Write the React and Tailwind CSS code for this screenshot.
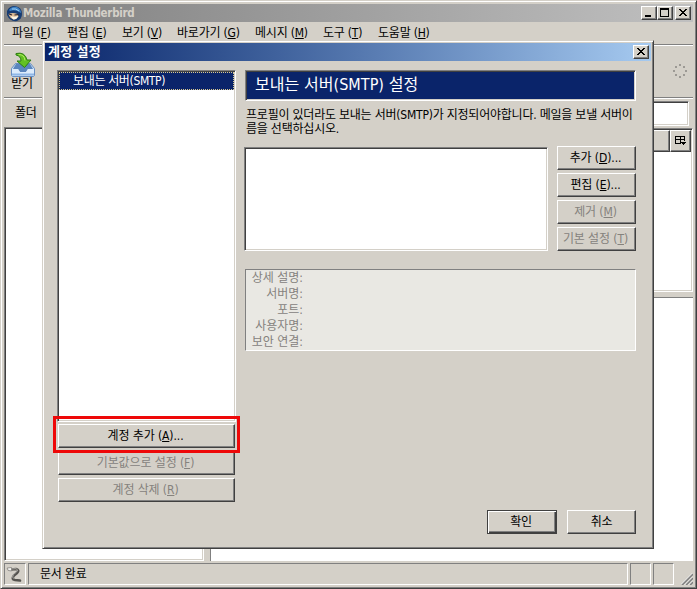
const RAISED =
  'border border-t-white border-l-white border-r-[#404040] border-b-[#404040] bg-[#d4d0c8] shadow-[inset_-1px_-1px_0_#808080]'
const SUNKEN =
  'border border-t-[#808080] border-l-[#808080] border-r-white border-b-white shadow-[inset_1px_1px_0_#404040,inset_-1px_-1px_0_#d4d0c8]'
const THIN_SUNKEN = 'border border-t-[#808080] border-l-[#808080] border-r-white border-b-white'
const WINDOW =
  'border border-t-[#d4d0c8] border-l-[#d4d0c8] border-r-[#404040] border-b-[#404040] bg-[#d4d0c8] shadow-[inset_1px_1px_0_#fff,inset_-1px_-1px_0_#808080]'

const MENUS = [
  { label: '파일', mnemonic: 'F', width: 'w-[55px]' },
  { label: '편집', mnemonic: 'E', width: 'w-[55px]' },
  { label: '보기', mnemonic: 'V', width: 'w-[55px]' },
  { label: '바로가기', mnemonic: 'G', width: 'w-[78px]' },
  { label: '메시지', mnemonic: 'M', width: 'w-[68px]' },
  { label: '도구', mnemonic: 'T', width: 'w-[55px]' },
  { label: '도움말', mnemonic: 'H', width: 'w-[60px]' },
]

const SERVER_BUTTONS = [
  { label: '추가', mnemonic: 'D', dots: true },
  { label: '편집', mnemonic: 'E', dots: true },
  { label: '제거', mnemonic: 'M', disabled: true },
  { label: '기본 설정', mnemonic: 'T', disabled: true },
]

const ACCOUNT_BUTTONS = [
  { label: '계정 추가', mnemonic: 'A', dots: true },
  { label: '기본값으로 설정', mnemonic: 'F', disabled: true },
  { label: '계정 삭제', mnemonic: 'R', disabled: true },
]

const DETAILS = ['상세 설명:', '서버명:', '포트:', '사용자명:', '보안 연결:']

function Label({ label, mnemonic, dots }) {
  return (
    <span className="whitespace-nowrap">
      {label} (<span className="underline underline-offset-1">{mnemonic}</span>){dots && '...'}
    </span>
  )
}

function PushButton({ disabled, className = '', ...label }) {
  return (
    <button
      disabled={disabled}
      className={`flex h-6 shrink-0 items-center justify-center pr-0.5 tracking-[-0.100px] ${RAISED} ${disabled ? 'text-[#85827d]' : 'text-black'} ${className}`}
    >
      <Label {...label} />
    </button>
  )
}

function CaptionButton({ type, className = '' }) {
  return (
    <button className={`flex h-[14px] w-4 items-center justify-center ${RAISED} ${className}`}>
      <svg width="12" height="10" viewBox="0 0 12 10" shapeRendering="crispEdges" className="shrink-0">
        {type === 'min' && <path d="M2 7h6v2H2z" />}
        {type === 'max' && <path fillRule="evenodd" d="M1 0h9v9H1zM2 2v6h7V2z" />}
        {type === 'close' && (
          <path d="M2 1h2v1h1v1h2V2h1V1h2v1H9v1H8v1H7v1h1v1h1v1h1v1H8V7H7V6H5v1H4v1H2V7h1V6h1V5h1V4H4V3H3V2H2z" />
        )}
      </svg>
    </button>
  )
}

function AppIcon() {
  return (
    <svg width="17" height="17" viewBox="0 0 17 17" className="shrink-0">
      <path d="M1 6Q3 1 9 1q7 1 7 8 0 5-5 7-7 1-10-6z" fill="#173c73" />
      <path d="M3 5q3-4 8-3 4 2 4 6-5-4-11-2z" fill="#3f83c6" />
      <path d="M6 4q4-1 7 2" fill="none" stroke="#9fd0f4" />
      <path d="M2.500 9q4-2 9 0l1 2.500q-2 3-5 3-4-1.500-5-5.500z" fill="#dcbb94" />
      <path d="M5 11q3 1.500 7 0-1 3.500-4.500 3.500-2-1-2.500-3.500z" fill="#fff8ea" />
      <path d="M3 9l3 1M8.500 10l4-.5" stroke="#2d2430" strokeWidth="1.2" />
    </svg>
  )
}

function GetMailIcon() {
  return (
    <svg width="26" height="25" viewBox="0 0 26 25" className="shrink-0">
      <path d="M5.500 11.500h15l4 5v7l-1 1h-21l-1-1v-7z" fill="#c3dbf5" stroke="#6a8fc2" />
      <path d="M6 12h14l3 5h-5l-2 3h-6l-2-3H3z" fill="#5b86bd" />
      <path d="M2 17h6l2 3h6l2-3h6v6.500H2z" fill="#dcebfb" />
      <path d="M2 21.500h22v2H2z" fill="#8fb6e6" />
      <path d="M6 1.500q9-2 11 6.500h4l-6.500 7.500L7 9h4q0-5-5-6z" fill="#62c021" stroke="#2d7d12" />
      <path d="M8.500 2.500q6 0 6.500 6" fill="none" stroke="#b2ec63" />
    </svg>
  )
}

function PlugIcon() {
  return (
    <svg width="18" height="18" viewBox="0 0 18 18" fill="none" strokeLinecap="round">
      <path d="M5 4.500l5-.5q4 1 1 4l-3 2.500q-3 4 1 4.500l5 .5" stroke="#55534f" strokeWidth="2.600" />
      <path d="M5 4l5-.3q3 1 .5 3.300l-3 2.500q-2 3 0 4" stroke="#aaa8a4" />
      <path d="M1.500 3l4-.5v3.500l-3-.5z" fill="#f4f4f2" stroke="#85837f" strokeWidth=".8" />
    </svg>
  )
}

function Throbber() {
  return (
    <svg width="16" height="16" viewBox="0 0 16 16" fill="#9c9994" shapeRendering="crispEdges">
      <path d="M7 1h2v2H7zM11 3h2v2h-2zM13 7h2v2h-2zM11 11h2v2h-2zM7 13h2v2H7zM3 11h2v2H3zM1 7h2v2H1zM3 3h2v2H3z" />
    </svg>
  )
}

function FolderPane() {
  return (
    <div className="flex w-[200px] flex-col">
      <div className="flex h-7 items-center pl-[11px]">폴더</div>
      <div className={`flex-1 bg-white ${SUNKEN}`} />
    </div>
  )
}

function MessagePane() {
  return (
    <div className="ml-1.5 flex flex-1 flex-col">
      <div className="flex h-[29px] justify-end pt-0.5 pr-1">
        <div className={`h-[25px] w-[180px] bg-white ${SUNKEN}`} />
      </div>
      <div className={`flex h-[164px] flex-col bg-white p-px ${SUNKEN}`}>
        <div className="flex h-[22px] shrink-0">
          <div className={`flex-1 ${RAISED}`} />
          <div className={`flex w-[21px] items-center justify-center ${RAISED}`}>
            <svg width="11" height="10" viewBox="0 0 11 10" shapeRendering="crispEdges" className="shrink-0">
              <path d="M0 0h10v1H0zM0 3h10v1H0zM0 0h1v8H0zM5 0h1v8H5zM9 0h1v5H9zM0 7h6v1H0zM6 6h5v1H6zM7 7h3v1H7zM8 8h1v1H8z" />
            </svg>
          </div>
        </div>
      </div>
      <div className="mt-[5px] flex-1 border-t border-l border-[#808080] bg-white" />
    </div>
  )
}

function StatusBar() {
  return (
    <div className="flex h-[26px] items-start gap-0.5 pt-0.5">
      <div className={`flex h-[22px] w-[22px] items-center justify-center ${THIN_SUNKEN}`}>
        <PlugIcon />
      </div>
      <div className={`flex h-[22px] w-[600px] items-center pb-px pl-[11px] ${THIN_SUNKEN}`}>문서 완료</div>
      <div className={`h-[22px] w-[21px] ${THIN_SUNKEN}`} />
      <div className={`h-[22px] w-[21px] ${THIN_SUNKEN}`} />
      <svg width="12" height="12" viewBox="0 0 12 12" className="mt-[10px] ml-[5px]">
        <path d="M1 12L12 1M5 12L12 5M9 12L12 9" stroke="#808080" strokeWidth="1.800" />
        <path d="M0 11.500L11.500 0M3.500 12L12 3.500M7.500 12L12 7.500" stroke="#fff" strokeWidth=".8" />
      </svg>
    </div>
  )
}

function AccountDialog() {
  return (
    <div className={`absolute top-[39px] left-[41px] h-[509px] w-[612px] p-0.5 ${WINDOW}`}>
      <div className="flex h-[18px] items-center justify-between bg-linear-to-r from-[#0a246a] to-[#a6caf0] pr-0.5 pl-[3px]">
        <span className="pb-px text-[13px] font-bold tracking-[0.2px] text-white">계정 설정</span>
        <CaptionButton type="close" />
      </div>

      <div className="flex pt-[9px] pl-3">
        {/* Account list */}
        <div className="w-[179px]">
          <div className={`h-[352px] bg-white p-px ${SUNKEN}`}>
            <div className="flex h-[18px] items-center border border-dotted border-[#d8c98f] bg-[#0a246a] pb-px pl-[13px] tracking-[-0.350px] text-white">
              보내는 서버(SMTP)
            </div>
          </div>
          <div className="mt-0.5 flex flex-col gap-[3px] pr-px pl-px">
            {ACCOUNT_BUTTONS.map((b) => (
              <PushButton key={b.label} {...b} />
            ))}
          </div>
        </div>

        {/* SMTP settings */}
        <div className="ml-2 w-[392px]">
          <div className={`ml-px flex h-[31px] items-center bg-[#0a246a] pb-px pl-[9px] text-[16px] tracking-[0.050px] text-white ${SUNKEN}`}>
            보내는 서버(SMTP) 설정
          </div>
          <p className="mt-[7px] ml-0.5 h-[38px] leading-[14px] whitespace-nowrap">
            프로필이 있더라도 보내는 서버(SMTP)가 지정되어야합니다. 메일을 보낼 서버이
            <br />
            름을 선택하십시오.
          </p>
          <div className="flex justify-between">
            <div className={`mt-px h-[104px] w-[304px] bg-white ${SUNKEN}`} />
            <div className="flex w-[79px] flex-col gap-[3px]">
              {SERVER_BUTTONS.map((b) => (
                <PushButton key={b.label} {...b} />
              ))}
            </div>
          </div>
          <div className={`mt-[18px] ml-px h-[82px] bg-[#e9e8e3] text-[#85827d] ${THIN_SUNKEN}`}>
            <div className="w-[57px] text-right">
              {DETAILS.map((d) => (
                <div key={d} className="h-4 leading-[17px] tracking-[0px] whitespace-nowrap">{d}</div>
              ))}
            </div>
          </div>
        </div>
      </div>

      <div className="mt-2 flex justify-end gap-[10px] pr-[15px]">
        <button className="flex h-6 w-[70px] items-center justify-center border border-[#404040] bg-[#d4d0c8] pr-0.5 pb-px shadow-[inset_1px_1px_0_#fff,inset_-1px_-1px_0_#404040,inset_-2px_-2px_0_#808080]">
          확인
        </button>
        <button className={`flex h-6 w-[69px] items-center justify-center pb-px ${RAISED}`}>취소</button>
      </div>

      {/* Highlight around the add-account button */}
      <div className="pointer-events-none absolute top-[375px] left-[10px] h-[37px] w-[187px] border-3 border-[#ee0808]" />
    </div>
  )
}

export default function App() {
  return (
    <div
      className={`relative flex h-[589px] w-[697px] flex-col overflow-hidden p-[3px] pb-px font-['DejaVu_Sans_Condensed','Noto_Sans_CJK_KR',sans-serif] text-[12px] tracking-[-0.220px] text-black ${WINDOW}`}
    >
      <div className="flex h-[18px] shrink-0 items-center bg-linear-to-r from-[#808080] to-[#c0c0c0] pr-0.5 pl-0.5">
        <AppIcon />
        <span className="flex-1 pt-0.5 text-[11.500px] font-bold tracking-[-0.280px] text-[#d4d0c8]">Mozilla Thunderbird</span>
        <CaptionButton type="min" />
        <CaptionButton type="max" />
        <CaptionButton type="close" className="ml-0.5" />
      </div>

      <div className="flex h-[22px] shrink-0 items-center pl-2">
        {MENUS.map((m) => (
          <div key={m.label} className={m.width}>
            <Label label={m.label} mnemonic={m.mnemonic} />
          </div>
        ))}
      </div>

      <div className="flex h-[55px] shrink-0 justify-between border-t border-b border-t-[#808080] border-b-white shadow-[inset_0_1px_0_#fff,inset_0_-1px_0_#808080]">
        <div className="flex w-[38px] flex-col items-center pt-[7px]">
          <GetMailIcon />
          <span className="-mt-px mr-0.5 leading-4">받기</span>
        </div>
        <div className="mt-[18px] mr-[5px]">
          <Throbber />
        </div>
      </div>

      <div className="flex flex-1">
        <FolderPane />
        <MessagePane />
      </div>

      <StatusBar />
      <AccountDialog />
    </div>
  )
}
